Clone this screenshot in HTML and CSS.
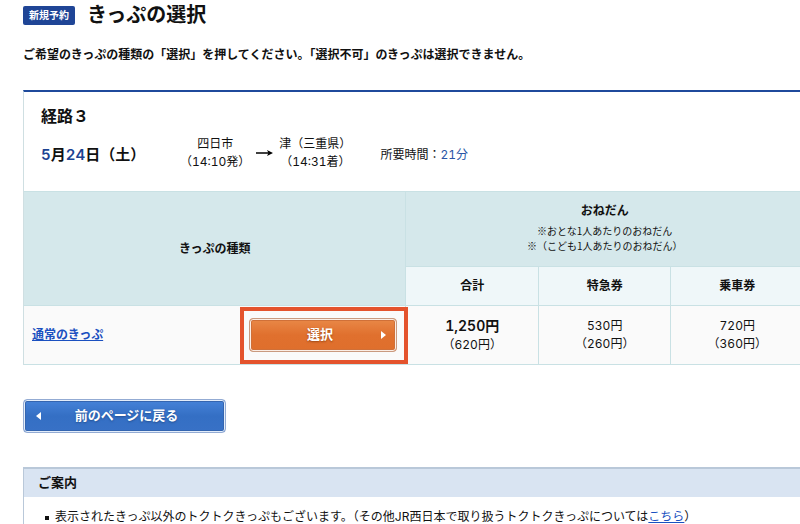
FILE: index.html
```html
<!DOCTYPE html>
<html lang="ja">
<head>
    <meta charset="UTF-8">
    <meta name="viewport" content="width=device-width, initial-scale=1.0">
    <title>きっぷの選択</title>
    <link rel="stylesheet" href="styles.css">
</head>
<body>
    <main class="page">
        <!-- 見出し -->
        <header class="page-head">
            <span class="status-label">新規予約</span>
            <h1>きっぷの選択</h1>
        </header>
        <p class="lead">ご希望のきっぷの種類の「選択」を押してください。「選択不可」のきっぷは選択できません。</p>

        <!-- 経路 -->
        <section class="route">
            <div class="route-info">
                <h2>経路３</h2>
                <div class="route-detail">
                    <p class="route-date"><span class="num">5</span>月<span class="num">24</span>日（土）</p>
                    <div class="route-stations">
                        <p class="station">四日市<br>（14:10発）</p>
                        <svg class="arrow" width="17" height="8" viewBox="0 0 17 8" aria-hidden="true">
                            <path d="M0 4H13" stroke="#000" stroke-width="1.5"/>
                            <path d="M11 1L17 4L11 7L12.500 4Z" fill="#000"/>
                        </svg>
                        <p class="station">津（三重県）<br>（14:31着）</p>
                    </div>
                    <p class="route-time">所要時間：<span class="num">21分</span></p>
                </div>
            </div>

            <table class="fare-table">
                <colgroup>
                    <col class="col-type">
                    <col class="col-price">
                    <col class="col-price">
                    <col class="col-price">
                </colgroup>
                <thead>
                    <tr class="row-head">
                        <th rowspan="2" scope="col">きっぷの種類</th>
                        <th colspan="3" scope="colgroup">
                            おねだん
                            <span class="note">※おとな1人あたりのおねだん<br>※（こども1人あたりのおねだん）</span>
                        </th>
                    </tr>
                    <tr class="row-sub">
                        <th scope="col">合計</th>
                        <th scope="col">特急券</th>
                        <th scope="col">乗車券</th>
                    </tr>
                </thead>
                <tbody>
                    <tr class="row-fare">
                        <td>
                            <div class="ticket">
                                <a href="#" class="ticket-name">通常のきっぷ</a>
                                <div class="select-wrap">
                                    <button type="button" class="btn btn-select">選択</button>
                                </div>
                            </div>
                        </td>
                        <td><strong class="total">1,250円</strong><br>（620円）</td>
                        <td>530円<br>（260円）</td>
                        <td>720円<br>（360円）</td>
                    </tr>
                </tbody>
            </table>
        </section>

        <button type="button" class="btn btn-back">前のページに戻る</button>

        <!-- ご案内 -->
        <section class="guide">
            <h2>ご案内</h2>
            <ul>
                <li>表示されたきっぷ以外のトクトクきっぷもございます。（その他JR西日本で取り扱うトクトクきっぷについては<a href="#">こちら</a>）</li>
            </ul>
        </section>
    </main>
</body>
</html>
```

FILE: styles.css
```css
/* 全体 */
* {
    margin: 0;
    padding: 0;
    box-sizing: border-box;
}

body {
    background: #fff;
    color: #111;
    font-family: Inter, "Noto Sans CJK JP", sans-serif;
    font-size: 12px;
    line-height: 18px;
    font-variant-numeric: tabular-nums;
    overflow-x: hidden;
}

a {
    color: #1a50c0;
}

.page {
    min-width: 804px;
    padding: 3px 0 0 23px;
}

.num {
    color: #1c4392;
}

/* 見出し */
.page-head {
    display: flex;
    align-items: center;
    gap: 12px;
}

.page-head h1 {
    font-size: 20px;
    line-height: 24px;
    font-weight: 600;
}

.status-label {
    padding: 0 6px;
    border-radius: 2px;
    background: #1f4596;
    color: #fff;
    font-size: 10px;
    line-height: 19px;
    font-weight: 700;
}

.lead {
    margin-top: 19px;
    font-weight: 600;
}

/* 経路 */
.route {
    margin-top: 26px;
    border-top: 2px solid #1f4a9c;
    border-left: 1px solid #cfdfe2;
}

.route-info {
    padding: 13px 17px 20px;
}

.route-info h2 {
    font-size: 16px;
    line-height: 22px;
    font-weight: 600;
}

.route-detail {
    display: flex;
    align-items: center;
    margin-top: 8px;
}

.route-date {
    width: 139px;
    padding-top: 4px;
    font-size: 15px;
    font-weight: 600;
}

.route-stations {
    display: flex;
    align-items: center;
    gap: 6px;
}

.station {
    text-align: center;
}

.route-time {
    margin-left: 29px;
    padding-top: 4px;
}

.route-time .num {
    color: #2a55a5;
}

/* おねだん表 */
.fare-table {
    width: 100%;
    table-layout: fixed;
    border-collapse: collapse;
    border-top: 1px solid #c3d3d6;
    border-bottom: 1px solid #c9e1e4;
    text-align: center;
}

.col-type {
    width: 49%;
}

.fare-table th,
.fare-table td {
    border: 1px solid #c9e1e4;
    border-left-width: 0;
}

.fare-table th {
    font-weight: 700;
}

.row-head {
    height: 75px;
    background: #d5e8eb;
}

.row-sub {
    height: 39px;
    background: #eff7f9;
}

.row-fare {
    height: 59px;
    background: #fafafa;
}

.note {
    display: block;
    margin-top: 3px;
    padding-bottom: 3px;
    font-family: "Noto Sans CJK JP", sans-serif;
    font-size: 10px;
    line-height: 15px;
    font-weight: 400;
}

.total {
    font-size: 14px;
    font-weight: 600;
}

.ticket {
    display: flex;
    align-items: center;
    justify-content: space-between;
    padding: 0 8px;
}

.ticket-name {
    font-weight: 600;
}

/* 選択ボタンを囲む枠 */
.select-wrap {
    position: relative;
}

.select-wrap::after {
    content: '';
    position: absolute;
    inset: -11px -11px -12px -9px;
    border: 4px solid #e4532d;
    pointer-events: none;
}

/* ボタン */
.btn {
    position: relative;
    display: block;
    height: 34px;
    padding-bottom: 2px;
    border-radius: 4px;
    color: #fff;
    font-family: inherit;
    font-size: 13px;
    line-height: 18px;
    font-weight: 700;
    cursor: pointer;
}

.btn::after {
    content: '';
    position: absolute;
    top: 12px;
    border: 4px solid transparent;
}

.btn-select {
    width: 148px;
    padding-right: 7px;
    border: 1px solid #c99a80;
    background: linear-gradient(#e98948, #e0702e 50%, #df6f2c);
    box-shadow: inset 0 0 0 1px #fbeee6, inset 0 0 0 2px #d07038;
    text-shadow: 0 1px 2px #9c4714;
}

.btn-select::after {
    right: 10px;
    border-left: 5px solid #fff;
    border-right: 0;
}

.btn-back {
    width: 203px;
    margin-top: 34px;
    padding-left: 4px;
    border: 1px solid #93abd3;
    background: linear-gradient(#4683d9, #346fc4 50%, #3871c6);
    box-shadow: inset 0 0 0 1px #e3edfa, inset 0 0 0 2px #3465b0;
    text-shadow: 0 1px 2px #234f92;
}

.btn-back::after {
    left: 12px;
    border-right: 5px solid #fff;
    border-left: 0;
}

/* ご案内 */
.guide {
    margin-top: 34px;
    border-top: 2px solid #b9c8d9;
    border-left: 1px solid #b9c8d9;
}

.guide h2 {
    padding: 3px 14px 5px;
    background: #d9e4f2;
    font-size: 13px;
    line-height: 20px;
    font-weight: 600;
}

.guide ul {
    padding: 11px 12px;
    list-style: none;
}

.guide li {
    padding-left: 19px;
    background: linear-gradient(#111, #111) 9px 8px / 4px 4px no-repeat;
}
```
